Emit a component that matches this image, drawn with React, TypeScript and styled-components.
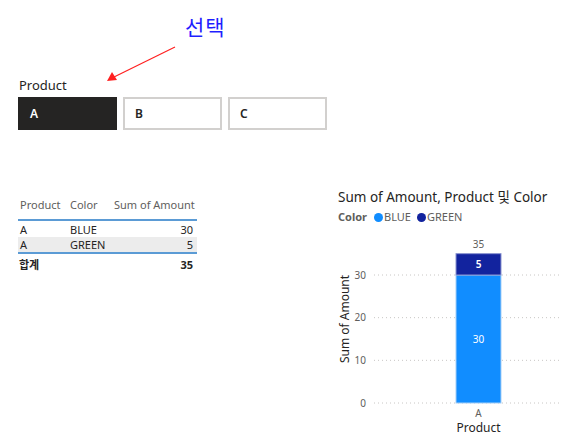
import React from 'react';
import styled, { createGlobalStyle } from 'styled-components';

const GlobalStyle = createGlobalStyle`
  body {
    margin: 0;
    background: #ffffff;
    font-family: "Noto Sans", "Noto Sans CJK KR", sans-serif;
    color: #252423;
  }
`;

const Page = styled.div`
  position: relative;
  width: 562px;
  height: 447px;
  overflow: hidden;
`;

const Annotation = styled.div`
  height: 76px;
  display: flex;
  padding-left: 185px;
  padding-top: 12px;
  box-sizing: border-box;
`;

const AnnotationText = styled.div`
  font-family: "Noto Sans CJK KR", sans-serif;
  font-size: 21px;
  line-height: 28px;
  color: #1f1fff;
  letter-spacing: 1px;
`;

const ArrowLayer = styled.svg`
  position: absolute;
  left: 0;
  top: 0;
`;

const Slicer = styled.div`
  padding-left: 18px;
  display: flex;
  flex-flow: column;
  gap: 3px;
`;

const SlicerLabel = styled.div`
  font-size: 13px;
  line-height: 18px;
  padding-left: 1px;
`;

const SlicerRow = styled.div`
  display: flex;
  gap: 6px;
`;

const SlicerButton = styled.div<{ selected?: boolean }>`
  width: 99px;
  height: 33px;
  box-sizing: border-box;
  display: flex;
  align-items: center;
  font-size: 12px;
  font-weight: 600;
  background: ${(p) => (p.selected ? '#252423' : '#ffffff')};
  color: ${(p) => (p.selected ? '#ffffff' : '#252423')};
  border: ${(p) => (p.selected ? 'none' : '2px solid #d2d0ce')};
  padding-left: ${(p) => (p.selected ? '12px' : '10px')};
`;

const Lower = styled.div`
  display: flex;
  justify-content: space-between;
  margin-top: 55px;
`;

const Table = styled.div`
  margin-left: 18px;
  margin-top: 10px;
  width: 179px;
  font-size: 11px;
  align-self: flex-start;
`;

type RowKind = 'head' | 'body' | 'shaded' | 'total';

const rowHeight: Record<RowKind, string> = {
  head: '26px',
  body: '16px',
  shaded: '17px',
  total: '20px',
};

const Row = styled.div<{ kind: RowKind }>`
  display: grid;
  grid-template-columns: 50px 44px 1fr;
  height: ${(p) => rowHeight[p.kind]};
  align-items: ${(p) => (p.kind === 'head' ? 'start' : 'center')};
  padding: ${(p) => (p.kind === 'head' ? '2px' : '0')} 4px 0 ${(p) => (p.kind === 'total' ? '1px' : '2px')};
  background: ${(p) => (p.kind === 'shaded' ? '#ececec' : 'transparent')};
  color: ${(p) => (p.kind === 'head' ? '#605e5c' : '#252423')};
  font-weight: ${(p) => (p.kind === 'total' ? 700 : 400)};
  border-bottom: ${(p) => (p.kind === 'head' || p.kind === 'shaded' ? '2px solid #5b9bd5' : 'none')};
  box-sizing: border-box;
`;

const Cell = styled.span<{ right?: boolean }>`
  text-align: ${(p) => (p.right ? 'right' : 'left')};
  white-space: nowrap;
`;

const Chart = styled.div`
  width: 232px;
  display: flex;
  flex-flow: column;
  margin-top: 2px;
`;

const ChartTitle = styled.div`
  padding-left: 8px;
  font-size: 13.5px;
  line-height: 20px;
  color: #252423;
  white-space: nowrap;
`;

const Legend = styled.div`
  padding-left: 8px;
  margin-top: 3px;
  display: flex;
  align-items: center;
  gap: 6px;
  font-size: 11px;
  line-height: 14px;
  color: #605e5c;
`;

const LegendTitle = styled.span`
  font-weight: 700;
  margin-right: 1px;
`;

const Dot = styled.span<{ color: string }>`
  width: 9px;
  height: 9px;
  border-radius: 50%;
  background: ${(p) => p.color};
`;

const LegendItem = styled.span`
  display: flex;
  align-items: center;
  gap: 1px;
`;

const Plot = styled.svg`
  display: block;
  margin-top: 12px;
  font-family: "Noto Sans", sans-serif;
`;

const BLUE = '#118DFF';
const DARK = '#12239E';

const scale = 128 / 30;
const zeroY = 167;

const App = () => {
  const ticks = [0, 10, 20, 30];
  const blueTop = zeroY - 30 * scale;
  const darkTop = zeroY - 35 * scale;
  return (
    <Page>
      <GlobalStyle />
      <Annotation>
        <AnnotationText>선택</AnnotationText>
      </Annotation>
      <ArrowLayer width="562" height="447">
        <line x1="175" y1="47" x2="114" y2="77" stroke="#ff2020" strokeWidth="1.2" />
        <polygon points="107,81 112,72 117,80" fill="#ff2020" />
      </ArrowLayer>
      <Slicer>
        <SlicerLabel>Product</SlicerLabel>
        <SlicerRow>
          <SlicerButton selected>A</SlicerButton>
          <SlicerButton>B</SlicerButton>
          <SlicerButton>C</SlicerButton>
        </SlicerRow>
      </Slicer>
      <Lower>
        <Table>
          <Row kind="head">
            <Cell>Product</Cell>
            <Cell>Color</Cell>
            <Cell right>Sum of Amount</Cell>
          </Row>
          <Row kind="body">
            <Cell>A</Cell>
            <Cell>BLUE</Cell>
            <Cell right>30</Cell>
          </Row>
          <Row kind="shaded">
            <Cell>A</Cell>
            <Cell>GREEN</Cell>
            <Cell right>5</Cell>
          </Row>
          <Row kind="total">
            <Cell>합계</Cell>
            <Cell />
            <Cell right>35</Cell>
          </Row>
        </Table>
        <Chart>
          <ChartTitle>Sum of Amount, Product 및 Color</ChartTitle>
          <Legend>
            <LegendTitle>Color</LegendTitle>
            <LegendItem>
              <Dot color={BLUE} />
              BLUE
            </LegendItem>
            <LegendItem>
              <Dot color={DARK} />
              GREEN
            </LegendItem>
          </Legend>
          <Plot width="232" height="211">
            {ticks.map((t) => {
              const y = zeroY - t * scale;
              return (
                <g key={t}>
                  <line x1="44" x2="232" y1={y} y2={y} stroke="#c8c6c4" strokeWidth="1" strokeDasharray="1 3" />
                  <text x="36" y={y + 3.5} textAnchor="end" fontSize="10" fill="#605e5c">
                    {t}
                  </text>
                </g>
              );
            })}
            <rect x="126" y={blueTop} width="45" height={zeroY - blueTop} fill={BLUE} stroke="#a6cff7" strokeWidth="1" />
            <rect x="126" y={darkTop} width="45" height={blueTop - darkTop} fill={DARK} stroke="#8a93d0" strokeWidth="1" />
            <text x="148.5" y={darkTop - 6} textAnchor="middle" fontSize="10" fill="#605e5c">35</text>
            <text x="148.5" y={(darkTop + blueTop) / 2 + 3.5} textAnchor="middle" fontSize="10" fontWeight="600" fill="#ffffff">5</text>
            <text x="148.5" y={(blueTop + zeroY) / 2 + 3.5} textAnchor="middle" fontSize="10" fill="#ffffff">30</text>
            <text x="148.5" y="181" textAnchor="middle" fontSize="10" fill="#605e5c">A</text>
            <text x="148.5" y="196" textAnchor="middle" fontSize="12" fill="#252423">Product</text>
            <text x="19" y="83" transform="rotate(-90 19 83)" textAnchor="middle" fontSize="12" fill="#252423">Sum of Amount</text>
          </Plot>
        </Chart>
      </Lower>
    </Page>
  );
};

export default App;
